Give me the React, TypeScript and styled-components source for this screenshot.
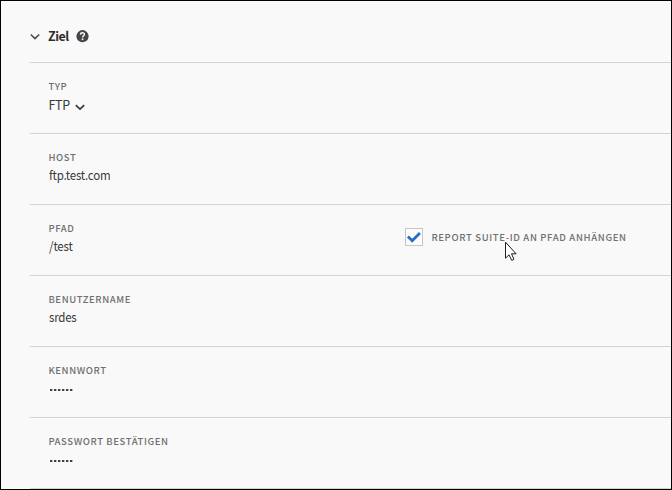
import React from "react";
import styled, { createGlobalStyle } from "styled-components";

const GlobalStyle = createGlobalStyle`
  *, *::before, *::after { box-sizing: border-box; }
  body { margin: 0; background: #f9f9f9; }
`;

const Panel = styled.main`
  position: relative;
  width: 672px;
  height: 490px;
  padding-left: 29px;
  overflow: hidden;
  border: 1px solid #000;
  background: #f9f9f9;
  color: #3a3a3a;
  font-family: "Noto Sans CJK SC", "Noto Sans", sans-serif;
`;

const Header = styled.header`
  display: flex;
  align-items: center;
  height: 61px;
  padding-top: 9px;
`;

const Title = styled.h2`
  width: 21px;
  margin: 0 7px 0 8px;
  font-size: 12.5px;
  line-height: 20px;
  font-weight: 700;
  letter-spacing: -0.5px;
  color: #2c2c2c;
`;

const Row = styled.section`
  display: grid;
  grid-template-columns: 357px 1fr;
  height: 71px;
  padding-left: 18px;
  border-top: 1px solid #d3d3d3;
`;

const Field = styled.div`
  padding-top: 15px;
`;

const Label = styled.div`
  padding-left: 0.4px;
  font-size: 9.5px;
  line-height: 16px;
  font-weight: 500;
  letter-spacing: 0.6px;
  white-space: nowrap;
  color: #707070;
`;

const CheckLabel = styled(Label)`
  margin-top: -1px;
  letter-spacing: 0.65px;
`;

const Value = styled.div`
  height: 20px;
  padding-left: 0.8px;
  font-size: 13px;
  line-height: 20px;
  letter-spacing: -0.25px;
  white-space: nowrap;
`;

const Select = styled(Value)`
  display: flex;
  align-items: center;
  gap: 5px;
  padding-left: 0.4px;
  font-size: 12.5px;
  line-height: 21px;
`;

const Condensed = styled.span`
  display: inline-block;
  transform: scaleX(0.885);
  transform-origin: left center;
`;

const Dots = styled.div`
  display: flex;
  gap: 2px;
  padding: 11px 0 0 2px;
`;

const Dot = styled.i`
  width: 2px;
  height: 2px;
  background: #404040;
  box-shadow: 1px 0 0 rgba(64, 64, 64, 0.35);
`;

const CheckField = styled.label`
  display: flex;
  align-items: center;
  gap: 8px;
  height: 18px;
  margin-top: 23px;
`;

const Box = styled.span`
  display: flex;
  flex: none;
  width: 18px;
  height: 18px;
  border: 1px solid #c6c6c6;
  background: #fcfcfc;
`;

const DropIcon = styled.svg`
  margin-top: 7px;
`;

const Pointer = styled.svg`
  position: absolute;
  left: 503px;
  top: 240px;
`;

const HelpIcon = () => (
  <svg width="13" height="13" viewBox="0 0 13 13">
    <circle cx="6.5" cy="6.2" r="6.1" fill="#464646" />
    <path d="M4.5 4.6C4.6 2.2 8.5 2.3 8.4 4.5C8.3 5.8 6.6 5.7 6.6 7.4" fill="none" stroke="#f9f9f9" strokeWidth="1.5" />
    <rect x="5.7" y="8.5" width="1.7" height="1.6" fill="#f9f9f9" />
  </svg>
);

const dots = [0, 1, 2, 3, 4, 5];

const Password = () => (
  <Dots>
    {dots.map((d) => (
      <Dot key={d} />
    ))}
  </Dots>
);

export default function App() {
  return (
    <Panel>
      <GlobalStyle />
      <Header>
        <svg width="10" height="10" viewBox="0 0 10 10">
          <path d="M0.8 3.5L5 7.6L9.2 3.5" fill="none" stroke="#484848" strokeWidth="1.5" />
        </svg>
        <Title>Ziel</Title>
        <HelpIcon />
      </Header>
      <Row>
        <Field>
          <Label>TYP</Label>
          <Select>
            FTP
            <DropIcon width="10" height="7" viewBox="0 0 10 7">
              <path d="M0.8 1.2L5 5.2L9.2 1.2" fill="none" stroke="#343434" strokeWidth="1.6" />
            </DropIcon>
          </Select>
        </Field>
      </Row>
      <Row>
        <Field>
          <Label>HOST</Label>
          <Value>
            <Condensed>ftp.test.com</Condensed>
          </Value>
        </Field>
      </Row>
      <Row>
        <Field>
          <Label>PFAD</Label>
          <Value>
            <Condensed>/test</Condensed>
          </Value>
        </Field>
        <CheckField>
          <Box>
            <svg width="16" height="16" viewBox="0 0 16 16">
              <path d="M1.9 7.6L6.2 11.8L13.9 4" fill="none" stroke="#2c6bc5" strokeWidth="2.8" />
            </svg>
          </Box>
          <CheckLabel>REPORT SUITE-ID AN PFAD ANHÄNGEN</CheckLabel>
        </CheckField>
      </Row>
      <Row>
        <Field>
          <Label>BENUTZERNAME</Label>
          <Value>
            <Condensed>srdes</Condensed>
          </Value>
        </Field>
      </Row>
      <Row>
        <Field>
          <Label>KENNWORT</Label>
          <Password />
        </Field>
      </Row>
      <Row>
        <Field>
          <Label>PASSWORT BESTÄTIGEN</Label>
          <Password />
        </Field>
      </Row>
      <Row />
      <Pointer width="13" height="21" viewBox="0 0 13 21">
        <path
          d="M1.5 1.2V17.2L5 13.8L7.7 19.3Q9.3 19.3 9.9 18.1L7.5 12.8H12.1Z"
          fill="#fff"
          stroke="#1b1b25"
          strokeWidth="1"
        />
      </Pointer>
    </Panel>
  );
}
